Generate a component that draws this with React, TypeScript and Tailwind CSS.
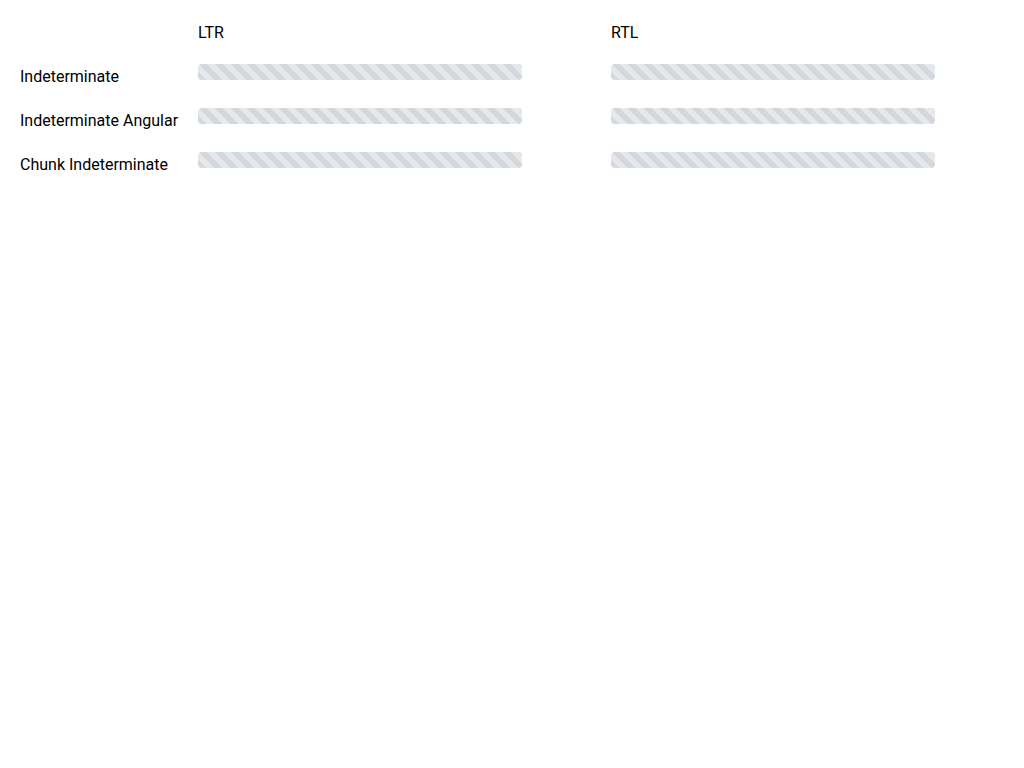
const rows = ["Indeterminate", "Indeterminate Angular", "Chunk Indeterminate"];

function StripedBar({ rtl }: { rtl?: boolean }) {
  return (
    <div
      dir={rtl ? "rtl" : "ltr"}
      className="h-4 w-[324px] rounded bg-[#e6e9ec] bg-[length:16px_16px] bg-[linear-gradient(45deg,#d4d8dc_25%,transparent_25%,transparent_50%,#d4d8dc_50%,#d4d8dc_75%,transparent_75%,transparent)]"
    />
  );
}

export default function App() {
  return (
    <div className="min-h-screen bg-white font-['Roboto',sans-serif] text-base text-black">
      <div className="grid grid-cols-[178px_413px_413px] gap-y-5 pl-5 pt-5">
        <div className="h-6" />
        <div className="h-6 pt-px leading-6">LTR</div>
        <div className="h-6 pt-px leading-6">RTL</div>
        {rows.map((label) => (
          <div key={label} className="contents">
            <div className="h-6 pt-px leading-6">{label}</div>
            <div>
              <StripedBar />
            </div>
            <div>
              <StripedBar rtl />
            </div>
          </div>
        ))}
      </div>
    </div>
  );
}
